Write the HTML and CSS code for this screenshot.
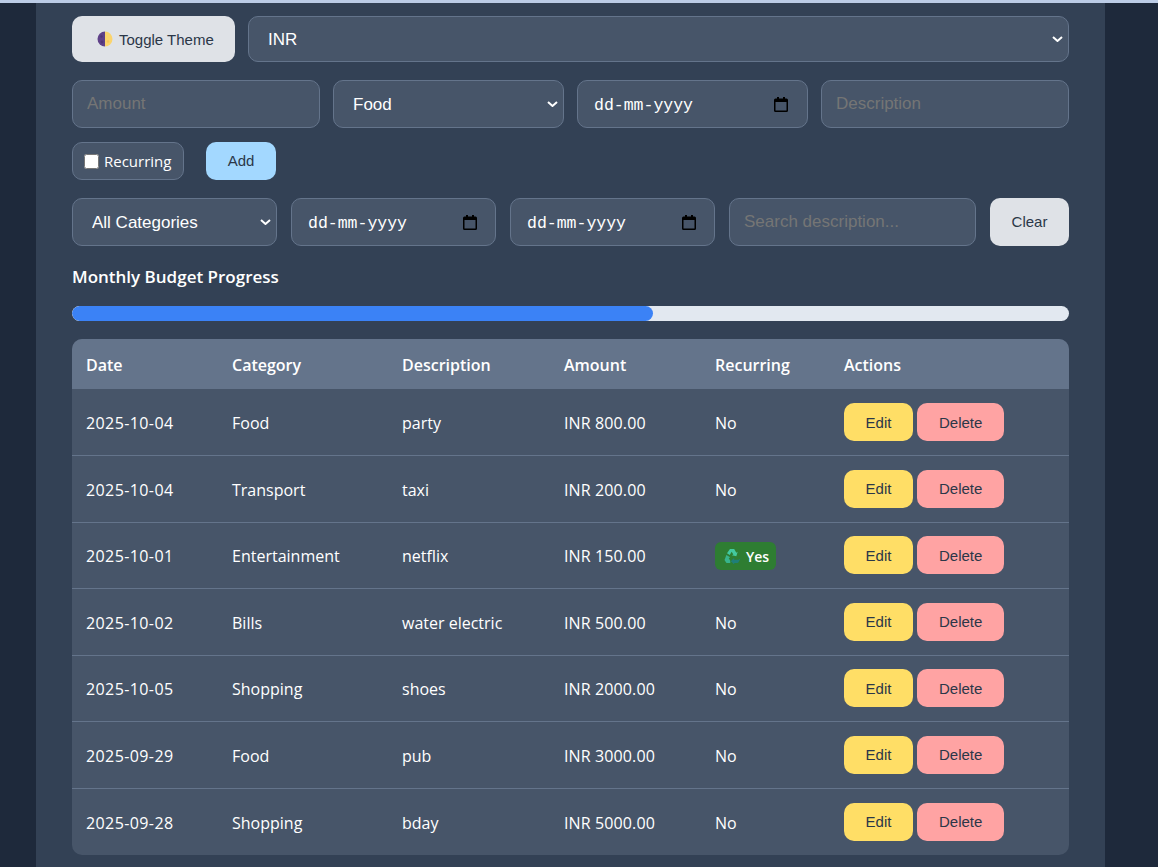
FILE: index.html
```html
<!DOCTYPE html>
<html lang="en">
  <head>
    <meta charset="UTF-8" />
    <title>Expense Tracker</title>
    <link rel="stylesheet" href="styles.css">
  </head>
  <body>
    <div class="container">
      <div class="top-row">
        <button class="btn btn-theme" type="button">
          <svg class="moon" viewBox="0 0 16 16" width="16" height="16">
            <path d="M8 0.5a7.5 7.5 0 0 0 0 15z" fill="#5f4189" />
            <path d="M8 0.5a7.5 7.5 0 0 1 0 15z" fill="#fbd46d" />
            <circle cx="4.5" cy="5.5" r="1.2" fill="#503676" />
            <circle cx="5" cy="11" r="1.4" fill="#503676" />
            <circle cx="11" cy="10.5" r="1.3" fill="#f6c65b" />
          </svg>
          Toggle Theme
        </button>
        <select class="field grow"><option>INR</option></select>
      </div>

      <form class="add-form">
        <input class="field" type="number" placeholder="Amount" />
        <select class="field"><option>Food</option></select>
        <div class="field field-date">
          <span>dd-mm-yyyy</span>
          <svg viewBox="0 0 14 15" width="14" height="15"><path d="M3 0h2v1.5h4V0h2v1.5h1.5A1.5 1.5 0 0 1 14 3v10.5a1.5 1.5 0 0 1-1.5 1.5h-11A1.5 1.5 0 0 1 0 13.5V3a1.5 1.5 0 0 1 1.5-1.5H3zM1.5 5v8.5h11V5z" fill="#000" /></svg>
        </div>
        <input class="field" type="text" placeholder="Description" />
      </form>

      <div class="add-row">
        <label class="recurring"><input type="checkbox" /> Recurring</label>
        <button class="btn btn-add" type="button">Add</button>
      </div>

      <div class="filters">
        <select class="field f-cat"><option>All Categories</option></select>
        <div class="field field-date f-date">
          <span>dd-mm-yyyy</span>
          <svg viewBox="0 0 14 15" width="14" height="15"><path d="M3 0h2v1.5h4V0h2v1.5h1.5A1.5 1.5 0 0 1 14 3v10.5a1.5 1.5 0 0 1-1.5 1.5h-11A1.5 1.5 0 0 1 0 13.5V3a1.5 1.5 0 0 1 1.5-1.5H3zM1.5 5v8.5h11V5z" fill="#000" /></svg>
        </div>
        <div class="field field-date f-date">
          <span>dd-mm-yyyy</span>
          <svg viewBox="0 0 14 15" width="14" height="15"><path d="M3 0h2v1.5h4V0h2v1.5h1.5A1.5 1.5 0 0 1 14 3v10.5a1.5 1.5 0 0 1-1.5 1.5h-11A1.5 1.5 0 0 1 0 13.5V3a1.5 1.5 0 0 1 1.5-1.5H3zM1.5 5v8.5h11V5z" fill="#000" /></svg>
        </div>
        <input class="field f-search" type="text" placeholder="Search description..." />
        <button class="btn btn-clear" type="button">Clear</button>
      </div>

      <h3 class="budget-title">Monthly Budget Progress</h3>
      <div class="progress"><div class="progress-fill" style="width:58.3%"></div></div>

      <div class="table-wrap">
        <table>
          <thead>
            <tr>
              <th class="c-date">Date</th>
              <th class="c-cat">Category</th>
              <th class="c-desc">Description</th>
              <th class="c-amt">Amount</th>
              <th class="c-rec">Recurring</th>
              <th>Actions</th>
            </tr>
          </thead>
          <tbody>
            <tr>
              <td class="date">2025-10-04</td><td>Food</td><td>party</td><td class="amt">INR 800.00</td><td>No</td>
              <td><button class="btn btn-edit">Edit</button> <button class="btn btn-del">Delete</button></td>
            </tr>
            <tr>
              <td class="date">2025-10-04</td><td>Transport</td><td>taxi</td><td class="amt">INR 200.00</td><td>No</td>
              <td><button class="btn btn-edit">Edit</button> <button class="btn btn-del">Delete</button></td>
            </tr>
            <tr>
              <td class="date">2025-10-01</td><td>Entertainment</td><td>netflix</td><td class="amt">INR 150.00</td>
              <td>
                <span class="badge">
                  <svg viewBox="0 0 16 16" width="17" height="17">
                    <path d="M5.6 1h4l2 3.4 1.3-.8-1.3 4.2-4.2-1 1.4-.8L7.2 3.6 5.4 6.6 2.8 5z" fill="#43c9a0" />
                    <path d="M2.2 6.6l3.6 2.2-1.3.8 1.4 2.4v2.2H3.2c-.6 0-1.1-.3-1.4-.8L.5 11.2z" fill="#38b48c" />
                    <path d="M15.6 9.8l-1.8 3.4c-.3.6-.8.8-1.4.8H9.6v1.6L6.4 12.4l3.2-3.2v1.8h4z" fill="#1f7f78" />
                  </svg>
                  Yes
                </span>
              </td>
              <td><button class="btn btn-edit">Edit</button> <button class="btn btn-del">Delete</button></td>
            </tr>
            <tr>
              <td class="date">2025-10-02</td><td>Bills</td><td>water electric</td><td class="amt">INR 500.00</td><td>No</td>
              <td><button class="btn btn-edit">Edit</button> <button class="btn btn-del">Delete</button></td>
            </tr>
            <tr>
              <td class="date">2025-10-05</td><td>Shopping</td><td>shoes</td><td class="amt">INR 2000.00</td><td>No</td>
              <td><button class="btn btn-edit">Edit</button> <button class="btn btn-del">Delete</button></td>
            </tr>
            <tr>
              <td class="date">2025-09-29</td><td>Food</td><td>pub</td><td class="amt">INR 3000.00</td><td>No</td>
              <td><button class="btn btn-edit">Edit</button> <button class="btn btn-del">Delete</button></td>
            </tr>
            <tr>
              <td class="date">2025-09-28</td><td>Shopping</td><td>bday</td><td class="amt">INR 5000.00</td><td>No</td>
              <td><button class="btn btn-edit">Edit</button> <button class="btn btn-del">Delete</button></td>
            </tr>
          </tbody>
        </table>
      </div>
    </div>
  </body>
</html>
```

FILE: styles.css
```css
* {
  box-sizing: border-box;
}
html,
body {
  height: 867px;
  overflow: hidden;
}
body {
  margin: 0;
  background: #1e293b;
  border-top: 3px solid #bccce6;
  font-family: "Open Sans", sans-serif;
  color: #fff;
}
.container {
  width: 1069px;
  margin-left: 36px;
  padding: 13px 36px 0;
  height: 900px;
  background: #334155;
}
.top-row {
  display: flex;
  gap: 13px;
  margin-bottom: 18px;
}
.grow {
  flex: 1;
}
.field {
  height: 48px;
  padding: 0 14px;
  background: #475569;
  border: 1px solid #64748b;
  border-radius: 10px;
  color: #fff;
  font-family: "Liberation Sans", sans-serif;
  font-size: 17px;
  min-width: 0;
}
.field::placeholder {
  color: #757575;
}
.top-row .field {
  height: 46px;
}
select.field {
  appearance: none;
  padding-left: 19px;
  background: #475569 url("data:image/svg+xml,%3Csvg xmlns='http://www.w3.org/2000/svg' viewBox='0 0 11 6'%3E%3Cpath d='M1 1l4.5 4L10 1' fill='none' stroke='%23fff' stroke-width='2'/%3E%3C/svg%3E") no-repeat right 5px center / 11px 6px;
}
.field-date {
  display: flex;
  align-items: center;
  justify-content: space-between;
  padding: 2px 19px 0 16px;
  font-family: "Liberation Mono", monospace;
  font-size: 16.5px;
}
.field-date svg {
  margin-top: -2px;
}
.btn {
  border: none;
  border-radius: 10px;
  font-family: "Liberation Sans", sans-serif;
  font-size: 15px;
  color: #2b3748;
  cursor: pointer;
}
.btn-theme {
  display: flex;
  align-items: center;
  gap: 6px;
  width: 163px;
  height: 46px;
  padding: 0 0 0 25px;
  background: #dfe2e7;
}
.add-form {
  display: grid;
  grid-template-columns: 248px 231px 231px 248px;
  gap: 13px;
  margin-bottom: 14px;
}
.add-row {
  display: flex;
  gap: 22px;
  margin-bottom: 18px;
}
.recurring {
  display: flex;
  align-items: center;
  gap: 5px;
  width: 112px;
  height: 38px;
  padding-left: 11px;
  background: #475569;
  border: 1px solid #64748b;
  border-radius: 10px;
  font-size: 15px;
}
.recurring input {
  width: 15px;
  height: 15px;
  margin: 0;
}
.btn-add {
  width: 70px;
  height: 38px;
  padding-bottom: 2px;
  background: #a3d8ff;
}
.filters {
  display: flex;
  gap: 14px;
  margin-bottom: 20px;
}
.f-cat {
  width: 205px;
}
.f-date {
  width: 205px;
  padding-right: 18px;
}
.f-search {
  width: 247px;
}
.btn-clear {
  width: 79px;
  height: 48px;
  padding-bottom: 2px;
  background: #dfe2e7;
}
.budget-title {
  margin: 0 0 18px;
  font-size: 17px;
  font-weight: 600;
  line-height: 22px;
}
.progress {
  height: 15px;
  margin-bottom: 18px;
  background: #e2e8f0;
  border-radius: 8px;
  overflow: hidden;
}
.progress-fill {
  height: 100%;
  background: #3b82f6;
  border-radius: 8px;
}
.table-wrap {
  border-radius: 10px;
  overflow: hidden;
}
table {
  width: 100%;
  border-collapse: collapse;
  table-layout: fixed;
  background: #475569;
  font-size: 16px;
}
th {
  height: 50px;
  padding: 2px 14px 0;
  background: #64748b;
  text-align: left;
  font-weight: 600;
}
td {
  height: 66.5px;
  padding: 2px 14px 0;
  border-top: 1px solid #64748b;
}
td:last-child {
  padding-top: 0;
}
tbody tr:first-child td {
  border-top: none;
}
.date {
  letter-spacing: 0.4px;
}
.amt {
  letter-spacing: 0.12px;
}
.c-date {
  width: 146px;
}
.c-cat {
  width: 170px;
}
.c-desc {
  width: 162px;
}
.c-amt {
  width: 151px;
}
.c-rec {
  width: 129px;
}
.badge {
  display: inline-flex;
  align-items: center;
  gap: 5px;
  height: 28px;
  padding: 0 7px 0 9px;
  background: #2e7d32;
  border-radius: 6px;
  font-size: 14px;
  font-weight: 600;
}
.btn-edit {
  width: 69px;
  height: 38px;
  background: #ffde66;
}
.btn-del {
  width: 87px;
  height: 38px;
  background: #ffa3a3;
}
```
